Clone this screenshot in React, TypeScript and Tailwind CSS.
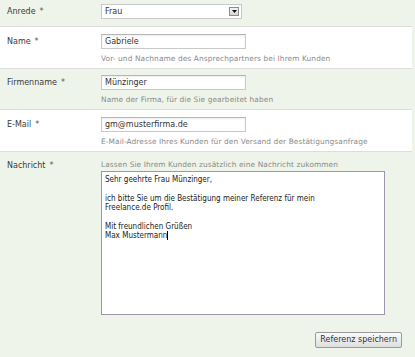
const labelCls = "w-[101px] shrink-0 pl-[7px] h-[15px] flex items-center text-[#3a3a3a]";
const inputCls =
  "w-[145px] h-[15px] bg-white border border-[#c9c9c9] border-t-[#b5b5b5] shadow-[inset_0_1px_2px_rgba(0,0,0,0.08)] px-[3px] flex items-center text-[#333]";
const hintCls = "mt-[4px] text-[7.4px] text-[#8a8a8a] tracking-[0.1px]";

function Label({ text }: { text: string }) {
  return (
    <div className={labelCls}>
      {text}
      <span className="ml-[4px] text-[#555]">*</span>
    </div>
  );
}

export default function App() {
  return (
    <div className="w-[415px] h-[357px] bg-[#eef4e9] font-['DejaVu_Sans',sans-serif] text-[8px] overflow-hidden">
      {/* Anrede */}
      <div className="h-[26px] pt-[4px] flex">
        <Label text="Anrede" />
        <div className="w-[141px] h-[15px] bg-white border border-[#c9c9c9] flex items-center justify-between pl-[3px] pr-[2px] text-[#333]">
          <span>Frau</span>
          <span className="w-[10px] h-[9px] border border-[#8c8c8c] bg-gradient-to-b from-[#f4f4f4] to-[#d6d6d6] flex items-center justify-center">
            <svg width="5" height="3" viewBox="0 0 5 3">
              <path d="M0 0h5L2.5 3z" fill="#111" />
            </svg>
          </span>
        </div>
      </div>

      {/* Name */}
      <div className="mr-[3px] h-[43px] bg-white border-y border-[#dddddd] pt-[7px] flex">
        <Label text="Name" />
        <div>
          <div className={inputCls}>Gabriele</div>
          <div className={hintCls}>Vor- und Nachname des Ansprechpartners bei Ihrem Kunden</div>
        </div>
      </div>

      {/* Firmenname */}
      <div className="h-[40px] pt-[6px] flex">
        <Label text="Firmenname" />
        <div>
          <div className={inputCls}>Münzinger</div>
          <div className={hintCls}>Name der Firma, für die Sie gearbeitet haben</div>
        </div>
      </div>

      {/* E-Mail */}
      <div className="mr-[3px] h-[43px] bg-white border-y border-[#dddddd] pt-[7px] flex">
        <Label text="E-Mail" />
        <div>
          <div className={inputCls}>gm@musterfirma.de</div>
          <div className={hintCls}>E-Mail-Adresse Ihres Kunden für den Versand der Bestätigungsanfrage</div>
        </div>
      </div>

      {/* Nachricht */}
      <div className="pt-[6px] flex">
        <Label text="Nachricht" />
        <div>
          <div className="text-[7.4px] text-[#8a8a8a] tracking-[0.1px] h-[13px] flex items-center">
            Lassen Sie Ihrem Kunden zusätzlich eine Nachricht zukommen
          </div>
          <div className="w-[284px] h-[144px] bg-white border border-[#9f95aa] px-[3px] pt-[3px] font-['DejaVu_Sans_Condensed','DejaVu_Sans',sans-serif] font-stretch-condensed text-[#222] leading-[9.4px] whitespace-pre">
            {"Sehr geehrte Frau Münzinger,\n\nich bitte Sie um die Bestätigung meiner Referenz für mein\nFreelance.de Profil.\n\nMit freundlichen Grüßen\nMax Mustermann"}
            <span className="inline-block w-px h-[9px] bg-black align-[-2px]" />
          </div>
        </div>
      </div>

      <div className="flex justify-end pr-[13px] pt-[17px]">
        <button className="h-[16px] px-[4px] border border-[#9a9a9a] rounded-[2px] bg-gradient-to-b from-[#fafafa] to-[#dedede] text-[8px] text-[#333]">
          Referenz speichern
        </button>
      </div>
    </div>
  );
}
